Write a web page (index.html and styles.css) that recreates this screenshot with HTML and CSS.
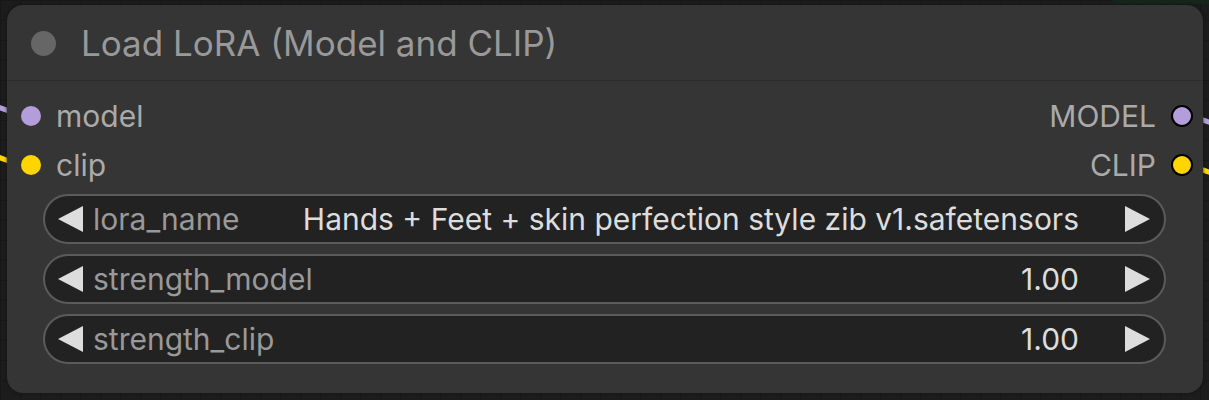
FILE: index.html
```html
<!DOCTYPE html>
<html lang="en">
<head>
  <meta charset="UTF-8">
  <title>Load LoRA</title>
  <link rel="stylesheet" href="styles.css">
</head>
<body>

  <!-- links coming in / going out, drawn on the canvas under the node -->
  <svg class="links" width="1209" height="400" viewBox="0 0 1209 400">
    <path d="M-20 100 C -5 104, 0 110, 20 114" stroke="#b39ddb" stroke-width="5" fill="none"/>
    <path d="M-20 150 C -5 154, 0 160, 20 164" stroke="#ffd500" stroke-width="5" fill="none"/>
    <path d="M1190 116 C 1200 118, 1205 122, 1230 128" stroke="#b39ddb" stroke-width="5" fill="none"/>
    <path d="M1190 166 C 1200 168, 1205 172, 1230 178" stroke="#ffd500" stroke-width="5" fill="none"/>
  </svg>
  <div class="other-node"></div>

  <div class="node">
    <div class="node-title">
      <span class="title-dot"></span>
      <span class="title-text">Load LoRA (Model and CLIP)</span>
    </div>

    <div class="node-body">
      <div class="slot-row">
        <div class="slot in"><span class="dot model"></span>model</div>
        <div class="slot out">MODEL<span class="dot model"></span></div>
      </div>
      <div class="slot-row">
        <div class="slot in"><span class="dot clip"></span>clip</div>
        <div class="slot out">CLIP<span class="dot clip"></span></div>
      </div>

      <div class="widgets">
        <div class="widget">
          <span class="arrow left"></span>
          <span class="w-label">lora_name</span>
          <span class="w-value">Hands + Feet + skin perfection style zib v1.safetensors</span>
          <span class="arrow right"></span>
        </div>
        <div class="widget">
          <span class="arrow left"></span>
          <span class="w-label">strength_model</span>
          <span class="w-value">1.00</span>
          <span class="arrow right"></span>
        </div>
        <div class="widget">
          <span class="arrow left"></span>
          <span class="w-label">strength_clip</span>
          <span class="w-value">1.00</span>
          <span class="arrow right"></span>
        </div>
      </div>
    </div>
  </div>

</body>
</html>
```

FILE: styles.css
```css
body {
  margin: 0;
  height: 400px;
  overflow: hidden;
  position: relative;
  background-color: #1c1c1c;
  background-image:
    linear-gradient(to right, #171717 1px, transparent 1px),
    linear-gradient(to bottom, #171717 1px, transparent 1px);
  background-size: 20px 20px;
  font-family: Inter, "Noto Sans", sans-serif;
}

/* canvas links */
.links {
  position: absolute;
  top: 0;
  left: 0;
}

.other-node {
  position: absolute;
  top: -20px;
  left: 1110px;
  width: 110px;
  height: 24px;
  border-radius: 8px;
  background: #16251a;
}

/* node */
.node {
  position: relative;
  margin: 5px 6px 0 7px;
  height: 388px;
  background: #353535;
  border-radius: 16px;
  box-shadow: 0 0 3px #111;
  display: flex;
  flex-direction: column;
}

.node-title {
  height: 75px;
  display: flex;
  align-items: center;
  gap: 25px;
  padding-left: 24px;
  border-bottom: 1px solid #2c2c2c;
}

.title-dot {
  width: 25px;
  height: 25px;
  border-radius: 50%;
  background: #666;
  margin-top: 2px;
}

.title-text {
  font-size: 35px;
  color: #999;
}

.node-body {
  padding-top: 10px;
}

.slot-row {
  height: 49px;
  display: flex;
  justify-content: space-between;
  align-items: center;
}

.slot {
  display: flex;
  align-items: center;
  font-size: 30px;
  color: #aaa;
}

.slot.in {
  gap: 15px;
  padding-left: 14px;
}

.slot.out {
  gap: 15px;
  padding-right: 10px;
}

.dot {
  width: 20px;
  height: 20px;
  border-radius: 50%;
}

.slot.out .dot {
  box-sizing: border-box;
  width: 22px;
  height: 22px;
  border: 2px solid #000;
}

.dot.model { background: #b39ddb; }
.dot.clip { background: #ffd500; }

/* widgets */
.widgets {
  display: flex;
  flex-direction: column;
  gap: 10px;
  margin: 5px 37px 0 36px;
}

.widget {
  height: 50px;
  box-sizing: border-box;
  border: 2px solid #5b5b5b;
  border-radius: 25px;
  background: #222;
  display: flex;
  align-items: center;
  padding: 0 14px 0 13px;
  font-size: 30px;
}

.arrow {
  width: 0;
  height: 0;
  border-top: 13px solid transparent;
  border-bottom: 13px solid transparent;
}

.arrow.left {
  border-right: 25px solid #ddd;
  margin-right: 10px;
}

.arrow.right {
  border-left: 25px solid #ddd;
  margin-left: 46px;
}

.w-label {
  color: #999;
}

.w-value {
  flex: 1;
  text-align: right;
  color: #ddd;
}
```
